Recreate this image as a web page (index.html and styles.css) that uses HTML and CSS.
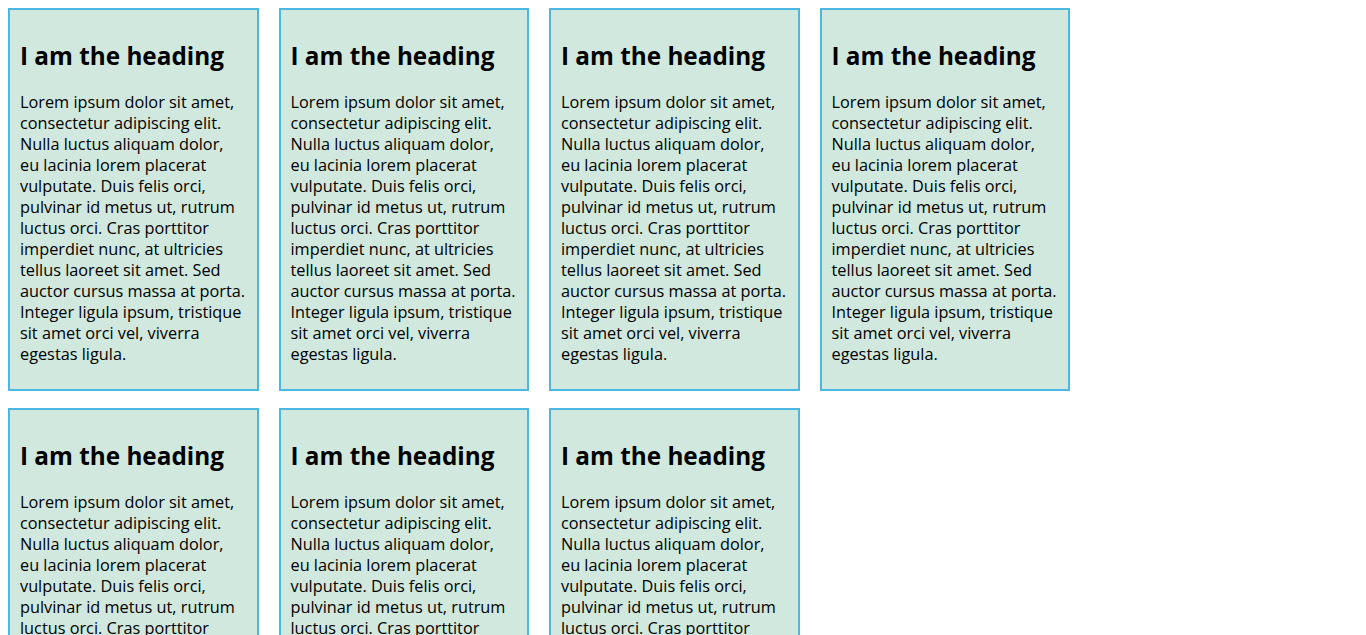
FILE: index.html
```html
<!DOCTYPE html>
<html lang="en">
<head>
<meta charset="utf-8">
<title>Cards</title>
<link rel="stylesheet" href="styles.css">
</head>
<body>
<div class="grid">
  <div class="card"><h2>I am the heading</h2><p>Lorem ipsum dolor sit amet, consectetur adipiscing elit. Nulla luctus aliquam dolor, eu lacinia lorem placerat vulputate. Duis felis orci, pulvinar id metus ut, rutrum luctus orci. Cras porttitor imperdiet nunc, at ultricies tellus laoreet sit amet. Sed auctor cursus massa at porta. Integer ligula ipsum, tristique sit amet orci vel, viverra egestas ligula.</p></div>
  <div class="card"><h2>I am the heading</h2><p>Lorem ipsum dolor sit amet, consectetur adipiscing elit. Nulla luctus aliquam dolor, eu lacinia lorem placerat vulputate. Duis felis orci, pulvinar id metus ut, rutrum luctus orci. Cras porttitor imperdiet nunc, at ultricies tellus laoreet sit amet. Sed auctor cursus massa at porta. Integer ligula ipsum, tristique sit amet orci vel, viverra egestas ligula.</p></div>
  <div class="card"><h2>I am the heading</h2><p>Lorem ipsum dolor sit amet, consectetur adipiscing elit. Nulla luctus aliquam dolor, eu lacinia lorem placerat vulputate. Duis felis orci, pulvinar id metus ut, rutrum luctus orci. Cras porttitor imperdiet nunc, at ultricies tellus laoreet sit amet. Sed auctor cursus massa at porta. Integer ligula ipsum, tristique sit amet orci vel, viverra egestas ligula.</p></div>
  <div class="card"><h2>I am the heading</h2><p>Lorem ipsum dolor sit amet, consectetur adipiscing elit. Nulla luctus aliquam dolor, eu lacinia lorem placerat vulputate. Duis felis orci, pulvinar id metus ut, rutrum luctus orci. Cras porttitor imperdiet nunc, at ultricies tellus laoreet sit amet. Sed auctor cursus massa at porta. Integer ligula ipsum, tristique sit amet orci vel, viverra egestas ligula.</p></div>
  <div class="card"><h2>I am the heading</h2><p>Lorem ipsum dolor sit amet, consectetur adipiscing elit. Nulla luctus aliquam dolor, eu lacinia lorem placerat vulputate. Duis felis orci, pulvinar id metus ut, rutrum luctus orci. Cras porttitor imperdiet nunc, at ultricies tellus laoreet sit amet. Sed auctor cursus massa at porta. Integer ligula ipsum, tristique sit amet orci vel, viverra egestas ligula.</p></div>
  <div class="card"><h2>I am the heading</h2><p>Lorem ipsum dolor sit amet, consectetur adipiscing elit. Nulla luctus aliquam dolor, eu lacinia lorem placerat vulputate. Duis felis orci, pulvinar id metus ut, rutrum luctus orci. Cras porttitor imperdiet nunc, at ultricies tellus laoreet sit amet. Sed auctor cursus massa at porta. Integer ligula ipsum, tristique sit amet orci vel, viverra egestas ligula.</p></div>
  <div class="card"><h2>I am the heading</h2><p>Lorem ipsum dolor sit amet, consectetur adipiscing elit. Nulla luctus aliquam dolor, eu lacinia lorem placerat vulputate. Duis felis orci, pulvinar id metus ut, rutrum luctus orci. Cras porttitor imperdiet nunc, at ultricies tellus laoreet sit amet. Sed auctor cursus massa at porta. Integer ligula ipsum, tristique sit amet orci vel, viverra egestas ligula.</p></div>
</div>
</body>
</html>
```
FILE: styles.css
```css
html {
  overflow-y: scroll;
}
::-webkit-scrollbar {
  width: 17px;
  background: #f1f1f1;
}
::-webkit-scrollbar-track {
  background: #f1f1f1;
}
::-webkit-scrollbar-thumb {
  background: #c1c1c1;
  border: 2px solid #f1f1f1;
  border-top-width: 0;
  border-bottom-width: 0;
}
::-webkit-scrollbar-button:single-button {
  display: block;
  height: 17px;
  background: #f1f1f1;
}
body {
  margin: 8px;
  font-family: "Open Sans", "Noto Sans", sans-serif;
  font-size: 16.3px;
  line-height: 21px;
  color: #000;
  background: #fff;
}
.grid {
  display: grid;
  grid-template-columns: repeat(4, 250.5px);
  column-gap: 20px;
  row-gap: 17px;
}
.card {
  border: 2px solid #4cb8e2;
  background: #d0e8dd;
  padding: 10px;
}
.card h2 {
  font-size: 24.3px;
  line-height: 32px;
  font-weight: bold;
  margin: 20px 0;
}
.card p {
  margin: 0 0 14px;
}
```
